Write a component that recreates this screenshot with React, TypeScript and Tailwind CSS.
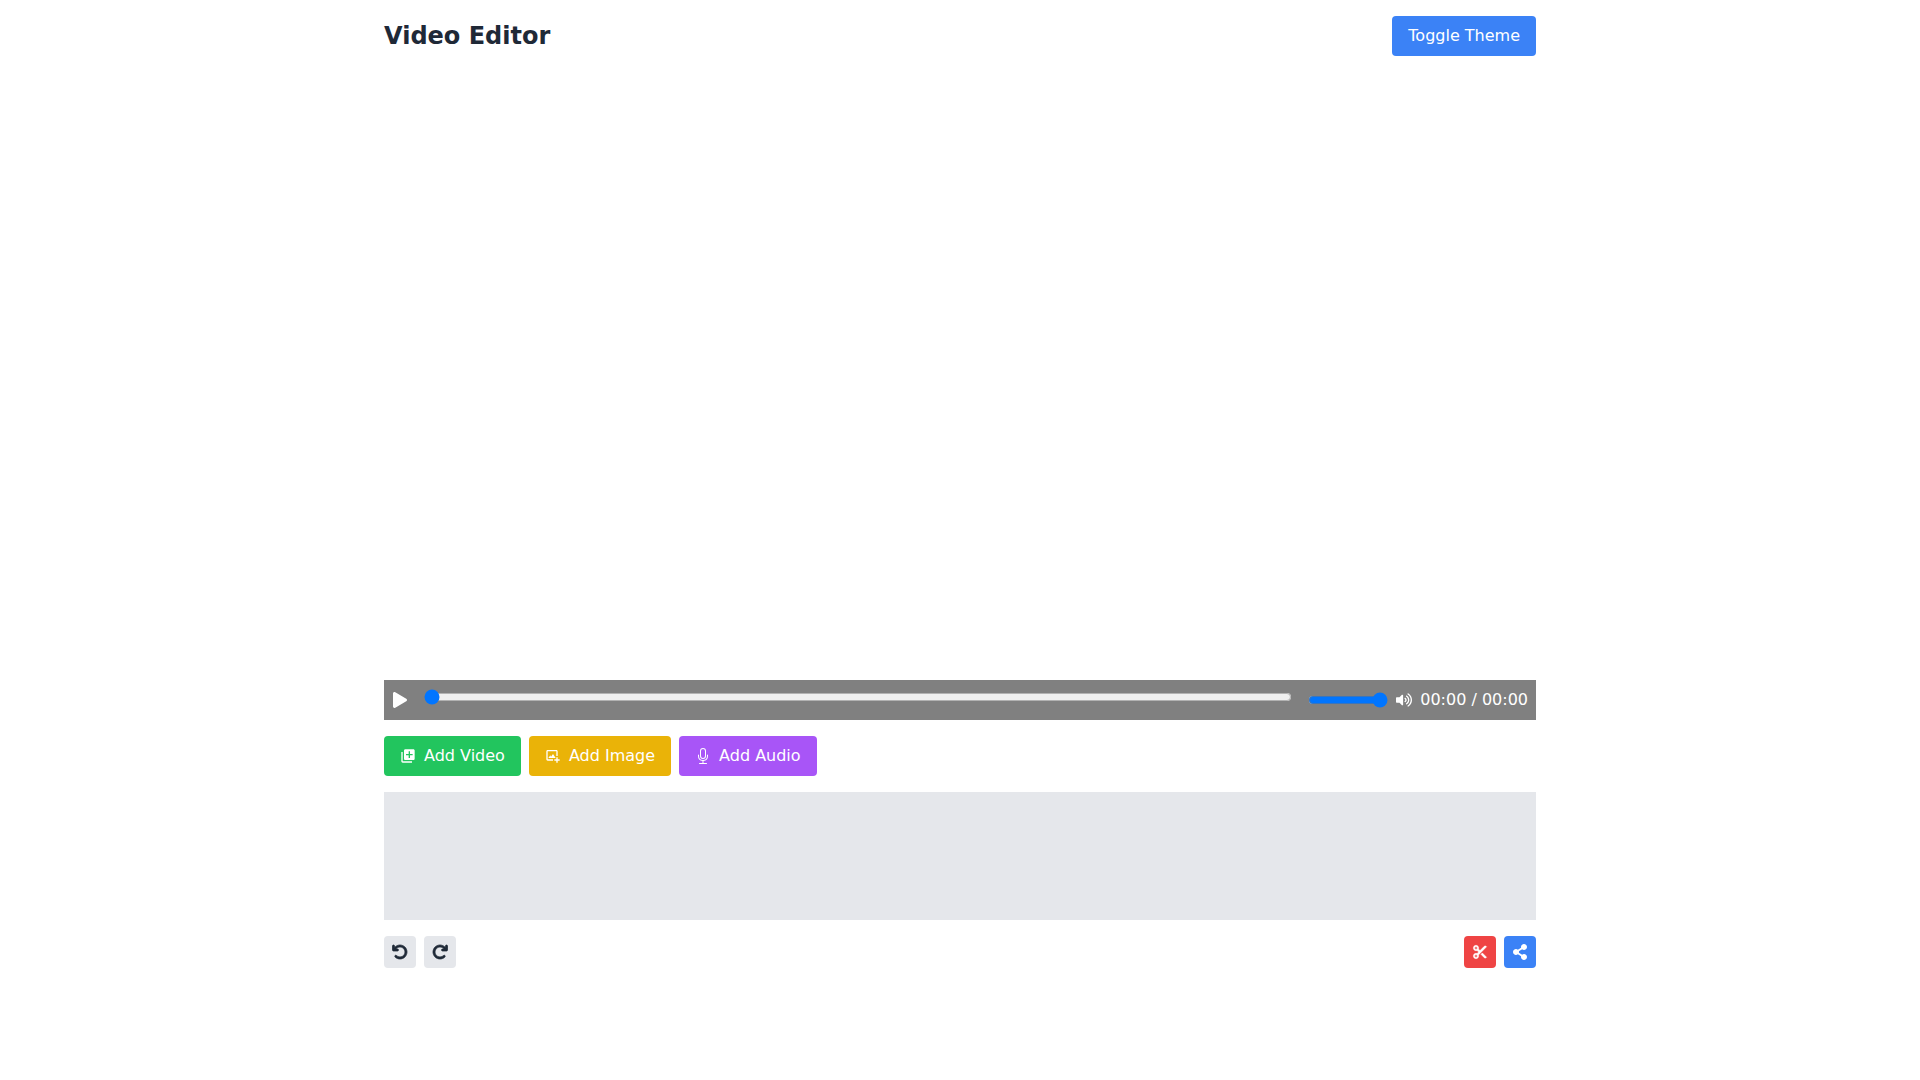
import { BiImageAdd } from "react-icons/bi";
import { BsMic } from "react-icons/bs";
import { FaPlay, FaShareAlt, FaVolumeUp } from "react-icons/fa";
import { FaArrowRotateLeft, FaArrowRotateRight } from "react-icons/fa6";
import { MdLibraryAdd } from "react-icons/md";
import { RiScissorsFill } from "react-icons/ri";

export default function App() {
  return (
    <div className="min-h-screen bg-white font-['DejaVu_Sans',sans-serif]">
      <div className="mx-auto max-w-6xl pt-4">
        <header className="mb-4 flex items-center justify-between">
          <h1 className="text-2xl font-bold text-[#1f2937]">Video Editor</h1>
          <button className="rounded bg-[#3b82f6] px-4 py-2 text-white">Toggle Theme</button>
        </header>

        <div className="relative aspect-video w-full">
          <div className="absolute inset-x-0 bottom-0 flex h-10 items-center bg-[#808080] px-2 text-white">
            <button>
              <FaPlay className="block h-4 w-4" />
            </button>
            <div className="mx-4 flex-1">
              <input type="range" min={0} max={100} defaultValue={0} className="w-full" />
            </div>
            <input type="range" min={0} max={100} defaultValue={100} className="w-20" />
            <FaVolumeUp className="ml-2 h-4 w-4" />
            <span className="ml-2">00:00 / 00:00</span>
          </div>
        </div>

        <div className="mt-4 flex gap-2">
          <button className="flex items-center rounded bg-[#22c55e] px-4 py-2 text-white">
            <MdLibraryAdd className="mr-2 h-4 w-4" />
            Add Video
          </button>
          <button className="flex items-center rounded bg-[#eab308] px-4 py-2 text-white">
            <BiImageAdd className="mr-2 h-4 w-4" />
            Add Image
          </button>
          <button className="flex items-center rounded bg-[#a855f7] px-4 py-2 text-white">
            <BsMic className="mr-2 h-4 w-4" />
            Add Audio
          </button>
        </div>

        <div className="mt-4 h-32 bg-[#e5e7eb]" />

        <div className="mt-4 flex justify-between">
          <div className="flex gap-2">
            <button className="flex h-8 w-8 items-center justify-center rounded bg-[#e5e7eb] text-[#1f2937]">
              <FaArrowRotateLeft className="h-4 w-4" strokeWidth={24} />
            </button>
            <button className="flex h-8 w-8 items-center justify-center rounded bg-[#e5e7eb] text-[#1f2937]">
              <FaArrowRotateRight className="h-4 w-4" strokeWidth={24} />
            </button>
          </div>
          <div className="flex gap-2">
            <button className="flex h-8 w-8 items-center justify-center rounded bg-[#ef4444] text-white">
              <RiScissorsFill className="h-4 w-4" strokeWidth={0.7} />
            </button>
            <button className="flex h-8 w-8 items-center justify-center rounded bg-[#3b82f6] text-white">
              <FaShareAlt className="h-4 w-4" />
            </button>
          </div>
        </div>
      </div>
    </div>
  );
}
